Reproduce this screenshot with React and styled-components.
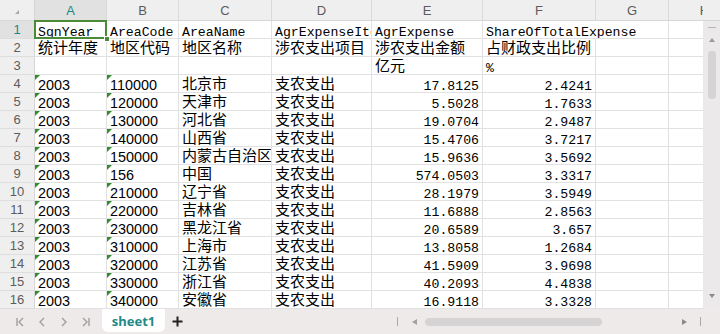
import React from 'react';
import styled, { createGlobalStyle, css } from 'styled-components';

const Global = createGlobalStyle`
  html, body { margin: 0; padding: 0; background: #fff; }
  body { font-family: "Liberation Sans", "Noto Sans CJK SC", sans-serif; }
`;

const Page = styled.div`
  width: 720px;
  height: 334px;
  display: flex;
  flex-direction: column;
  overflow: hidden;
  background: #fff;
`;

const Main = styled.div`
  display: flex;
  height: 309px;
  overflow: hidden;
`;

const Sheet = styled.div`
  flex: 1;
  overflow: hidden;
  display: grid;
  grid-template-columns: 35px 72px 72px 93px 100px 111px 113px 73px 72px;
  grid-template-rows: 21px;
  grid-auto-rows: 18px;
  align-content: start;
`;

const Corner = styled.div`
  box-sizing: border-box;
  background: #efefef;
  border-right: 1px solid #d6d6d6;
  border-bottom: 1px solid #d6d6d6;
  display: flex;
  justify-content: flex-end;
  align-items: flex-end;
  padding: 0 15px 6px 0;
`;

const CornerMark = styled.div`
  width: 0;
  height: 0;
  border-left: 4px solid transparent;
  border-bottom: 4px solid #a9a9a9;
`;

const ColHead = styled.div`
  box-sizing: border-box;
  background: ${p => (p.$active ? '#e1e1e1' : '#efefef')};
  border-right: 1px solid #d9d9d9;
  border-bottom: 1px solid #d6d6d6;
  display: flex;
  align-items: center;
  justify-content: center;
  font-family: "Liberation Sans", sans-serif;
  font-size: 13px;
  color: ${p => (p.$active ? '#23877f' : '#5c5c5c')};
  padding-top: 1px;
`;

const RowHead = styled.div`
  box-sizing: border-box;
  background: ${p => (p.$active ? '#e1e1e1' : '#efefef')};
  border-right: 1px solid #d6d6d6;
  border-bottom: 1px solid #dedede;
  display: flex;
  align-items: center;
  justify-content: center;
  font-family: "Liberation Sans", sans-serif;
  font-size: 13px;
  color: ${p => (p.$active ? '#23877f' : '#5c5c5c')};
`;

const fonts = {
  mono: css`
    font-family: "Liberation Mono", "Noto Sans CJK SC", monospace;
    font-size: 13.2px;
    line-height: 13px;
    padding-top: 5px;
  `,
  cjk: css`
    font-family: "Noto Sans CJK SC", sans-serif;
    font-size: 15px;
    line-height: 16px;
    padding-top: 0;
  `,
  code: css`
    font-family: "Liberation Sans", sans-serif;
    font-size: 14.4px;
    line-height: 14px;
    padding-top: 3px;
  `,
};

const Cell = styled.div`
  box-sizing: border-box;
  position: relative;
  border-right: 1px solid ${p => (p.$spill ? 'transparent' : '#e1e1e1')};
  border-bottom: 1px solid #e1e1e1;
  padding-left: 3px;
  padding-right: 3px;
  white-space: nowrap;
  overflow-x: ${p => (p.$spill || p.$selected ? 'visible' : 'clip')};
  overflow-y: visible;
  display: flex;
  align-items: flex-start;
  justify-content: ${p => (p.$right ? 'flex-end' : 'flex-start')};
  color: #000;
  ${p => fonts[p.$kind || 'mono']}
  ${p =>
    p.$flag &&
    css`
      &::before {
        content: '';
        position: absolute;
        top: 0;
        left: 0;
        border-top: 5px solid #2f8d2f;
        border-right: 5px solid transparent;
      }
    `}
  ${p =>
    p.$selected &&
    css`
      z-index: 2;
      &::before {
        content: '';
        position: absolute;
        top: -1px;
        left: -1px;
        right: -1px;
        bottom: -1px;
        border: 2px solid #4a8a38;
      }
      &::after {
        content: '';
        position: absolute;
        right: -4px;
        bottom: -4px;
        width: 4px;
        height: 4px;
        background: #4a8a38;
        border: 1px solid #fff;
      }
    `}
`;

const VScroll = styled.div`
  width: 17px;
  flex-shrink: 0;
  background: #ebe9e9;
  display: flex;
  flex-direction: column;
  align-items: center;
`;

const VCap = styled.div`
  align-self: stretch;
  height: 21px;
  box-sizing: border-box;
  background: #efefef;
  border-bottom: 1px solid #d6d6d6;
`;

const Dash = styled.div`
  margin-top: 6px;
  width: 8px;
  height: 1px;
  background: #b5b5b5;
`;

const Arrow = styled.div`
  width: 0;
  height: 0;
  border-left: 3px solid transparent;
  border-right: 3px solid transparent;
  ${p =>
    p.$dir === 'up'
      ? css`
          border-bottom: 4px solid #9a9a9a;
          margin-top: 10px;
        `
      : css`
          border-top: 4px solid #8a8a8a;
          margin-top: auto;
          margin-bottom: 11px;
        `}
`;

const VThumb = styled.div`
  margin-top: 9px;
  width: 8px;
  height: 48px;
  border-radius: 4px;
  background: #d5d3d3;
`;

const TabBar = styled.div`
  height: 25px;
  background: #eeeaea;
  display: flex;
  align-items: flex-start;
`;

const Nav = styled.div`
  display: flex;
  padding-left: 9px;
  height: 25px;
  align-items: center;
`;

const NavBtn = styled.div`
  width: 22px;
  display: flex;
  justify-content: center;
  align-items: center;
`;

const Tab = styled.div`
  margin-left: 5px;
  width: 63px;
  height: 23px;
  background: #fff;
  border-radius: 0 0 6px 6px;
  display: flex;
  align-items: center;
  justify-content: center;
  font-family: "Noto Sans", "Liberation Sans", sans-serif;
  font-weight: 700;
  font-size: 13px;
  color: #1f8a86;
`;

const AddBtn = styled.div`
  margin-left: 6px;
  height: 25px;
  width: 12px;
  display: flex;
  align-items: center;
  justify-content: center;
`;

const HScroll = styled.div`
  margin-left: auto;
  width: 304px;
  height: 25px;
  display: flex;
  align-items: center;
  padding-right: 19px;
`;

const Tick = styled.div`
  width: 1px;
  height: 9px;
  background: #aaa;
`;

const HArrow = styled.div`
  width: 0;
  height: 0;
  border-top: 3px solid transparent;
  border-bottom: 3px solid transparent;
  ${p =>
    p.$dir === 'left'
      ? css`
          border-right: 5px solid #a0a0a0;
          margin-left: 14px;
        `
      : css`
          border-left: 5px solid #8a8a8a;
          margin-left: auto;
          margin-right: 13px;
        `}
`;

const HThumb = styled.div`
  margin-left: 8px;
  width: 177px;
  height: 8px;
  border-radius: 4px;
  background: #d5d3d3;
`;

const NavIcon = ({ type }) => {
  const c = '#9e9e9e';
  return (
    <svg width="10" height="10" viewBox="0 0 10 10">
      {type === 'first' && (
        <>
          <line x1="2" y1="1" x2="2" y2="9" stroke={c} strokeWidth="1.4" />
          <polyline points="8,1 4,5 8,9" fill="none" stroke={c} strokeWidth="1.4" />
        </>
      )}
      {type === 'prev' && <polyline points="7,1 3,5 7,9" fill="none" stroke={c} strokeWidth="1.4" />}
      {type === 'next' && <polyline points="3,1 7,5 3,9" fill="none" stroke={c} strokeWidth="1.4" />}
      {type === 'last' && (
        <>
          <polyline points="2,1 6,5 2,9" fill="none" stroke={c} strokeWidth="1.4" />
          <line x1="8" y1="1" x2="8" y2="9" stroke={c} strokeWidth="1.4" />
        </>
      )}
    </svg>
  );
};

const PlusIcon = () => (
  <svg width="11" height="11" viewBox="0 0 11 11">
    <line x1="5.5" y1="0.5" x2="5.5" y2="10.5" stroke="#222" strokeWidth="2" />
    <line x1="0.5" y1="5.5" x2="10.5" y2="5.5" stroke="#222" strokeWidth="2" />
  </svg>
);

const letters = ['A', 'B', 'C', 'D', 'E', 'F', 'G', 'H'];

const data = [
  ['2003', '110000', '北京市', '支农支出', '17.8125', '2.4241'],
  ['2003', '120000', '天津市', '支农支出', '5.5028', '1.7633'],
  ['2003', '130000', '河北省', '支农支出', '19.0704', '2.9487'],
  ['2003', '140000', '山西省', '支农支出', '15.4706', '3.7217'],
  ['2003', '150000', '内蒙古自治区', '支农支出', '15.9636', '3.5692'],
  ['2003', '156', '中国', '支农支出', '574.0503', '3.3317'],
  ['2003', '210000', '辽宁省', '支农支出', '28.1979', '3.5949'],
  ['2003', '220000', '吉林省', '支农支出', '11.6888', '2.8563'],
  ['2003', '230000', '黑龙江省', '支农支出', '20.6589', '3.657'],
  ['2003', '310000', '上海市', '支农支出', '13.8058', '1.2684'],
  ['2003', '320000', '江苏省', '支农支出', '41.5909', '3.9698'],
  ['2003', '330000', '浙江省', '支农支出', '40.2093', '4.4838'],
  ['2003', '340000', '安徽省', '支农支出', '16.9118', '3.3328'],
];

const header1 = ['SgnYear', 'AreaCode', 'AreaName', 'AgrExpenseItem', 'AgrExpense', 'ShareOfTotalExpense'];
const header2 = ['统计年度', '地区代码', '地区名称', '涉农支出项目', '涉农支出金额', '占财政支出比例'];

export default function App() {
  return (
    <Page>
      <Global />
      <Main>
        <Sheet>
          <Corner>
            <CornerMark />
          </Corner>
          {letters.map(l => (
            <ColHead key={l} $active={l === 'A'}>
              {l}
            </ColHead>
          ))}

          <RowHead $active>1</RowHead>
          {header1.map((t, i) => (
            <Cell key={t} $kind="mono" $selected={i === 0} $spill={i === 5}>
              {t}
            </Cell>
          ))}
          <Cell />
          <Cell />

          <RowHead>2</RowHead>
          {header2.map(t => (
            <Cell key={t} $kind="cjk">
              {t}
            </Cell>
          ))}
          <Cell />
          <Cell />

          <RowHead>3</RowHead>
          <Cell />
          <Cell />
          <Cell />
          <Cell />
          <Cell $kind="cjk">亿元</Cell>
          <Cell $kind="mono">%</Cell>
          <Cell />
          <Cell />

          {data.map((r, i) => (
            <React.Fragment key={i}>
              <RowHead>{i + 4}</RowHead>
              <Cell $kind="code" $flag>{r[0]}</Cell>
              <Cell $kind="code" $flag>{r[1]}</Cell>
              <Cell $kind="cjk">{r[2]}</Cell>
              <Cell $kind="cjk">{r[3]}</Cell>
              <Cell $kind="mono" $right>{r[4]}</Cell>
              <Cell $kind="mono" $right>{r[5]}</Cell>
              <Cell />
              <Cell />
            </React.Fragment>
          ))}
        </Sheet>
        <VScroll>
          <VCap />
          <Dash />
          <Arrow $dir="up" />
          <VThumb />
          <Arrow $dir="down" />
        </VScroll>
      </Main>
      <TabBar>
        <Nav>
          <NavBtn><NavIcon type="first" /></NavBtn>
          <NavBtn><NavIcon type="prev" /></NavBtn>
          <NavBtn><NavIcon type="next" /></NavBtn>
          <NavBtn><NavIcon type="last" /></NavBtn>
        </Nav>
        <Tab>sheet1</Tab>
        <AddBtn><PlusIcon /></AddBtn>
        <HScroll>
          <Tick />
          <HArrow $dir="left" />
          <HThumb />
          <HArrow $dir="right" />
          <Tick />
        </HScroll>
      </TabBar>
    </Page>
  );
}
